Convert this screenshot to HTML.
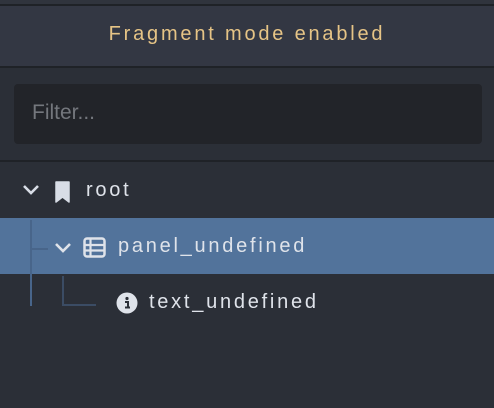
<!DOCTYPE html>
<html><head><style>
body{margin:0;width:494px;height:408px;background:#2b2f37;font-family:"Liberation Sans",sans-serif;position:relative;overflow:hidden}
.a{position:absolute}
.t{position:absolute;font-size:20px;letter-spacing:2.75px;color:#dfe3ea;line-height:22px;white-space:nowrap}
</style></head><body>
<div class="a" style="left:0;top:0;width:494px;height:4px;background:#30343d"></div>
<div class="a" style="left:0;top:4px;width:494px;height:2px;background:#1f2227"></div>
<div class="a" style="left:0;top:6px;width:494px;height:60px;background:#333743"></div>
<div class="a" style="left:0;top:66px;width:494px;height:2px;background:#1f2227"></div>
<div class="t" style="left:0;width:494px;text-align:center;top:23px;color:#e6c486;font-size:20px;letter-spacing:2.8px">Fragment mode enabled</div>
<div class="a" style="left:14px;top:84px;width:468px;height:60px;background:#222429;border-radius:4px"></div>
<div class="t" style="left:32px;top:102px;color:#74777d;letter-spacing:0;font-size:21px">Filter...</div>
<div class="a" style="left:0;top:160px;width:494px;height:2px;background:#1f2227"></div>

<svg class="a" style="left:20px;top:182px" width="22" height="16" viewBox="0 0 22 16"><path d="M4 4l7 7 7-7" stroke="#d8dde6" stroke-width="2.6" fill="none"/></svg>
<svg class="a" style="left:54px;top:180px" width="18" height="23" viewBox="0 0 18 23"><path d="M2 2h13v20l-6.5-5L2 22z" fill="#d8dde6" stroke="#d8dde6" stroke-linejoin="round" stroke-width="1.5"/></svg>
<div class="t" style="left:86px;top:179px">root</div>

<div class="a" style="left:0;top:218px;width:494px;height:56px;background:#52739b"></div>
<div class="a" style="left:30px;top:220px;width:2px;height:86px;background:#48658a"></div>
<div class="a" style="left:31px;top:248px;width:17px;height:2px;background:#48658a"></div>
<svg class="a" style="left:52px;top:240px" width="22" height="16" viewBox="0 0 22 16"><path d="M4 4l7 7 7-7" stroke="#dfe3ea" stroke-width="2.6" fill="none"/></svg>
<svg class="a" style="left:83px;top:237px" width="23" height="22" viewBox="0 0 23 22"><rect x="1.5" y="1.5" width="20" height="18" rx="2.5" fill="none" stroke="#dfe3ea" stroke-width="2.5"/><path d="M1.5 8h20M1.5 13.5h20M7.5 2v17" stroke="#dfe3ea" stroke-width="2.2"/></svg>
<div class="t" style="left:118px;top:235px">panel_undefined</div>

<div class="a" style="left:62px;top:276px;width:2px;height:30px;background:#3b4c64"></div>
<div class="a" style="left:62px;top:304px;width:34px;height:2px;background:#3b4c64"></div>
<svg class="a" style="left:116px;top:292px" width="22" height="22" viewBox="0 0 22 22"><circle cx="11" cy="11" r="10.5" fill="#dfe3ea"/><circle cx="11" cy="6.5" r="1.6" fill="#2b2f37"/><path d="M9 10h3v5.5M9 15.5h5" stroke="#2b2f37" stroke-width="2" fill="none"/></svg>
<div class="t" style="left:149px;top:291px">text_undefined</div>
</body></html>
